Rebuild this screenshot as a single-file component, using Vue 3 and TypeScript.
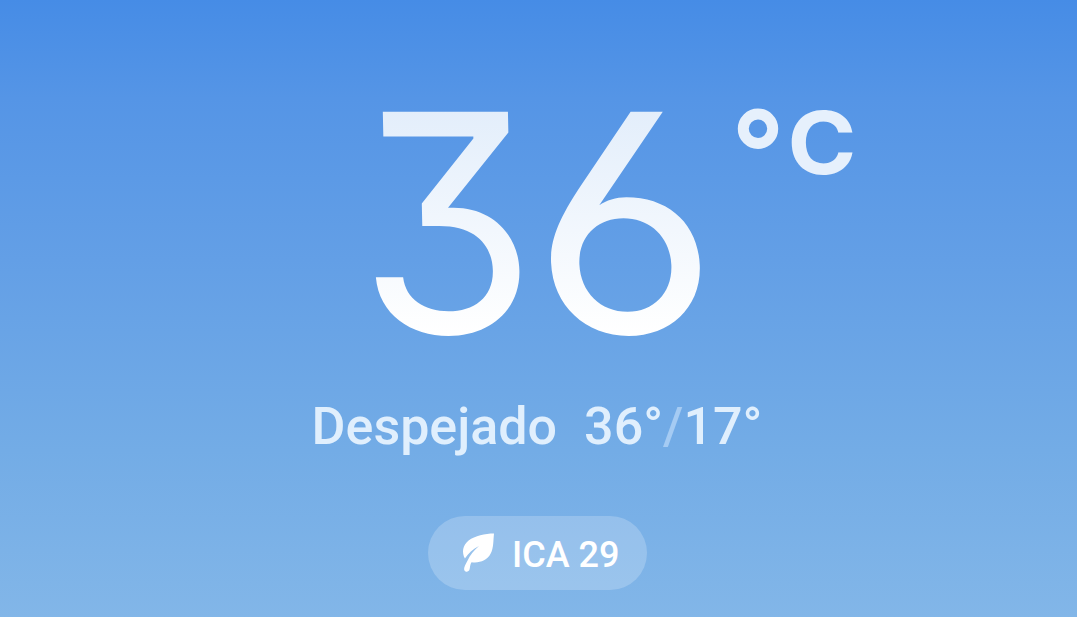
<script setup lang="ts">
interface Weather {
  degrees: string[]
  unit: string
  condition: string
  high: number
  low: number
  airQuality: number
}

const weather: Weather = {
  degrees: ['3', '6'],
  unit: 'C',
  condition: 'Despejado',
  high: 36,
  low: 17,
  airQuality: 29,
}
</script>

<template>
  <main class="weather">
    <svg class="temperature" viewBox="0 0 1077 380" role="img" aria-label="36 °C">
      <defs>
        <linearGradient id="digit-fill" gradientUnits="userSpaceOnUse" x1="0" y1="-222" x2="0" y2="2">
          <stop offset="0" stop-color="#e3eefb" />
          <stop offset="1" stop-color="#ffffff" />
        </linearGradient>
      </defs>
      <text class="digit" transform="translate(359.5 333) skewX(1.2) scale(0.946 1)">{{ weather.degrees[0] }}</text>
      <text class="digit" transform="translate(535 333) skewX(2.5) scale(1.057 1)">{{ weather.degrees[1] }}</text>
      <circle class="ring" cx="758" cy="128.7" r="14.7" />
      <text class="unit" transform="translate(787.5 173.5) scale(1.07 1)">{{ weather.unit }}</text>
    </svg>

    <p class="summary">
      <span class="condition">{{ weather.condition }}</span>
      <span class="range">{{ weather.high }}°<span class="slash">/</span>{{ weather.low }}°</span>
    </p>

    <div class="air">
      <svg class="leaf" viewBox="0 0 34 40" aria-hidden="true">
        <path d="M33 .4C24 .4 14 2.6 7.6 7.4C1.6 12.2.6 19 3.9 25.6C7 20.6 12 16.2 18 13C13.2 17.2 9 22 6.6 27.5C4.6 31.4 2.6 34.5 3.2 37C4.2 39.6 7.8 39.2 8.5 36.6C9.1 34.4 9 31.6 10.5 29.2C18 30.4 26 27.8 29.7 20.6C32.8 14.6 32.2 7.4 33 .4Z" />
      </svg>
      <span class="index">ICA {{ weather.airQuality }}</span>
    </div>
  </main>
</template>

<style>
body {
  margin: 0;
}
</style>

<style scoped>
.weather {
  display: flex;
  flex-direction: column;
  align-items: center;
  width: 1077px;
  height: 617px;
  overflow: hidden;
  background: linear-gradient(#468ce6 0%, #5595e6 16%, #639fe6 42%, #73ace6 73%, #82b6e8 100%);
  font-family: Roboto, "Liberation Sans", sans-serif;
}

.temperature {
  flex: none;
  width: 1077px;
  height: 380px;
  overflow: visible;
}

.digit {
  fill: url(#digit-fill);
  font-family: Inter, sans-serif;
  font-size: 304px;
  font-weight: 400;
  font-feature-settings: "cv03", "cv09";
}

.ring {
  fill: none;
  stroke: #e6f0fc;
  stroke-width: 11;
}

.unit {
  fill: #e6f0fc;
  font-family: Inter, sans-serif;
  font-size: 87px;
  font-weight: 700;
}

.summary {
  display: flex;
  gap: 27px;
  margin: 16px 3px 0 0;
  color: #e0effd;
  font-size: 52px;
  font-weight: 500;
  line-height: 61px;
  white-space: nowrap;
}

.slash {
  color: #a5cbf3;
}

.air {
  display: flex;
  align-items: center;
  box-sizing: border-box;
  width: 219px;
  height: 74px;
  margin: 59px 2px 0 0;
  padding-left: 33px;
  border-radius: 37px;
  background: rgba(255, 255, 255, 0.21);
  color: #fff;
  font-size: 36px;
  font-weight: 500;
  line-height: 42px;
  white-space: nowrap;
}

.leaf {
  width: 34px;
  height: 40px;
  margin-right: 17px;
  fill: #fff;
}

.index {
  padding-top: 4px;
}
</style>
